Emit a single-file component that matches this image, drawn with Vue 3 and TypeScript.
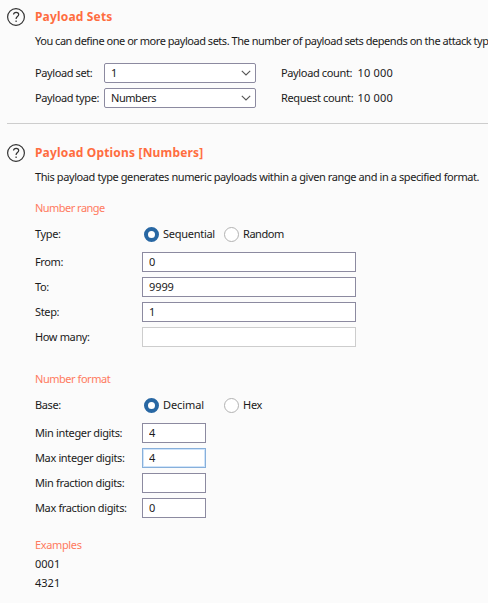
<script setup lang="ts">
import { ref } from 'vue'

interface Field {
  label: string
  value: string
  disabled?: boolean
  focused?: boolean
}

const payloadSet = ref('1')
const payloadType = ref('Numbers')
const numberType = ref('Sequential')
const base = ref('Decimal')

const rangeFields = ref<Field[]>([
  { label: 'From:', value: '0' },
  { label: 'To:', value: '9999' },
  { label: 'Step:', value: '1' },
  { label: 'How many:', value: '', disabled: true },
])

const formatFields = ref<Field[]>([
  { label: 'Min integer digits:', value: '4' },
  { label: 'Max integer digits:', value: '4', focused: true },
  { label: 'Min fraction digits:', value: '' },
  { label: 'Max fraction digits:', value: '0' },
])

const examples = ['0001', '4321']
</script>

<template>
  <main class="panel">
    <section class="sets">
      <header class="head">
        <svg class="help" viewBox="0 0 18 18">
          <circle cx="9" cy="9" r="8.4" />
          <path d="M6.5 6.5C6.7 5 7.7 4.3 9.1 4.3C10.7 4.3 11.7 5.1 11.7 6.5C11.7 8.5 9.1 8.6 9.1 10.8V11.1" />
          <path d="M9.1 12.5V14" />
        </svg>
        <h2 class="title">Payload Sets</h2>
      </header>
      <p class="description intro">You can define one or more payload sets. The number of payload sets depends on the attack typ</p>
      <div class="selectors">
        <div class="row">
          <span class="select-label">Payload set:</span>
          <div class="select">
            <span>{{ payloadSet }}</span>
            <svg class="chevron" viewBox="0 0 10 6"><path d="M0.8 0.8L5 5L9.2 0.8" /></svg>
          </div>
          <span class="count-label">Payload count:</span><span class="count">10 000</span>
        </div>
        <div class="row">
          <span class="select-label">Payload type:</span>
          <div class="select">
            <span>{{ payloadType }}</span>
            <svg class="chevron" viewBox="0 0 10 6"><path d="M0.8 0.8L5 5L9.2 0.8" /></svg>
          </div>
          <span class="count-label">Request count:</span><span class="count">10 000</span>
        </div>
      </div>
    </section>

    <section class="options">
      <header class="head">
        <svg class="help" viewBox="0 0 18 18">
          <circle cx="9" cy="9" r="8.4" />
          <path d="M6.5 6.5C6.7 5 7.7 4.3 9.1 4.3C10.7 4.3 11.7 5.1 11.7 6.5C11.7 8.5 9.1 8.6 9.1 10.8V11.1" />
          <path d="M9.1 12.5V14" />
        </svg>
        <h2 class="title">Payload Options [Numbers]</h2>
      </header>
      <p class="description summary">This payload type generates numeric payloads within a given range and in a specified format.</p>

      <div class="group range">
        <h3 class="subtitle">Number range</h3>
        <div class="row choices">
          <span class="field-label">Type:</span>
          <label v-for="option in ['Sequential', 'Random']" :key="option" class="choice">
            <input v-model="numberType" type="radio" name="type" :value="option" />
            <span :class="option.toLowerCase()">{{ option }}</span>
          </label>
        </div>
        <div class="fields">
          <label v-for="field in rangeFields" :key="field.label" class="row">
            <span class="field-label">{{ field.label }}</span>
            <input v-model="field.value" class="box wide" type="text" :disabled="field.disabled" />
          </label>
        </div>
      </div>

      <div class="group format">
        <h3 class="subtitle">Number format</h3>
        <div class="row choices">
          <span class="field-label">Base:</span>
          <label v-for="option in ['Decimal', 'Hex']" :key="option" class="choice">
            <input v-model="base" type="radio" name="base" :value="option" />
            <span :class="option.toLowerCase()">{{ option }}</span>
          </label>
        </div>
        <div class="fields">
          <label v-for="field in formatFields" :key="field.label" class="row">
            <span class="field-label">{{ field.label }}</span>
            <input v-model="field.value" class="box" :class="{ focused: field.focused }" type="text" />
          </label>
        </div>
      </div>

      <div class="group examples">
        <h3 class="subtitle">Examples</h3>
        <p v-for="example in examples" :key="example" class="example">{{ example }}</p>
      </div>
    </section>
  </main>
</template>

<style>
body {
  background: #fbfbfb;
  overflow: hidden;
}
</style>

<style scoped>
.panel {
  box-sizing: border-box;
  width: 488px;
  height: 603px;
  padding-left: 7px;
  overflow: hidden;
  background: #fbfbfb;
  color: #1a1a1a;
  font: 11px/18px "Noto Sans", sans-serif;
  letter-spacing: -0.36px;
  white-space: nowrap;
}
h2, h3, p { margin: 0; }
.sets {
  box-sizing: border-box;
  height: 124px;
  padding-top: 8px;
  border-bottom: 1px solid #cdcdcd;
}
.options { padding-top: 20px; }
.head {
  display: flex;
  align-items: center;
  gap: 10px;
  height: 18px;
}
.help {
  width: 18px;
  height: 18px;
  fill: none;
  stroke: #333;
  stroke-width: 1.2;
}
.title {
  color: #ff6d3f;
  font-size: 12px;
  font-weight: 700;
  line-height: 18px;
  letter-spacing: 0.17px;
}
.description { margin: 6px 0 0 28px; }
.intro { letter-spacing: -0.47px; }
.summary { letter-spacing: -0.41px; }
.selectors {
  display: flex;
  flex-direction: column;
  gap: 5px;
  margin: 13px 0 0 28px;
}
.row {
  display: flex;
  align-items: center;
  height: 20px;
}
.select-label {
  width: 69px;
  letter-spacing: -0.4px;
}
.select {
  box-sizing: border-box;
  display: flex;
  align-items: center;
  justify-content: space-between;
  width: 152px;
  height: 20px;
  margin-right: 25px;
  padding: 0 4px 0 6px;
  border: 1px solid #8c8aa0;
  border-radius: 2px;
  background: #fff;
  letter-spacing: -0.45px;
}
.chevron {
  width: 10px;
  height: 6px;
  fill: none;
  stroke: #555;
  stroke-width: 1.1;
}
.count-label { width: 76.5px; }
.count { letter-spacing: 0.2px; }
.group { margin-left: 28px; }
.range { margin-top: 13px; }
.format { margin-top: 23px; }
.examples { margin-top: 18px; }
.subtitle {
  color: #ff7a60;
  font-size: 11px;
  font-weight: 400;
  line-height: 18px;
}
.range .subtitle { letter-spacing: -0.53px; }
.format .subtitle { letter-spacing: -0.46px; }
.choices { margin-top: 7px; }
.field-label { width: 107px; }
.choice {
  display: flex;
  align-items: center;
  width: 78px;
  margin-left: 2px;
  letter-spacing: -0.27px;
}
.choice input {
  appearance: none;
  box-sizing: border-box;
  flex: none;
  width: 15px;
  height: 15px;
  margin: 0 4px 0 0;
  border: 1px solid #b2b2b2;
  border-radius: 50%;
  background: #fff;
}
.choice input:checked { border: 4px solid #2867a3; }
.random { letter-spacing: -0.45px; }
.decimal { letter-spacing: -0.1px; }
.fields {
  display: flex;
  flex-direction: column;
  gap: 5px;
  margin-top: 8px;
}
.box {
  box-sizing: border-box;
  width: 64px;
  height: 20px;
  margin: 0;
  padding: 0 6px 2px;
  border: 1px solid #8c8aa0;
  border-radius: 0;
  outline: 0;
  background: #fff;
  color: #1a1a1a;
  font: inherit;
  line-height: 16px;
  letter-spacing: -0.1px;
}
.wide { width: 214px; }
.box:disabled { border-color: #cdcdcd; }
.focused {
  border-color: #87afda;
  box-shadow: inset 0 0 0 1px #cfe4fa;
}
.example { height: 19px; line-height: 19px; letter-spacing: 0; }
</style>
